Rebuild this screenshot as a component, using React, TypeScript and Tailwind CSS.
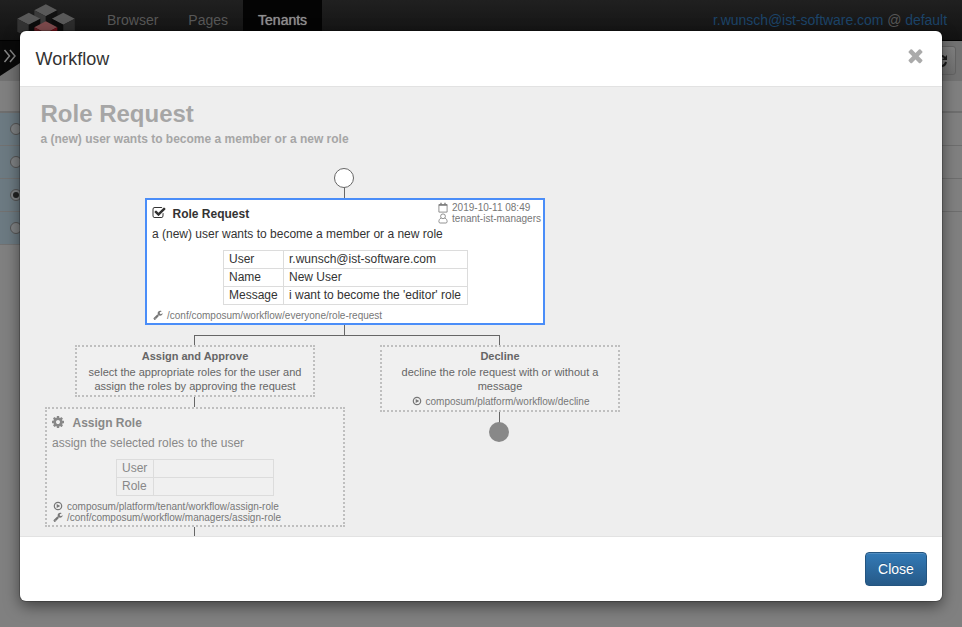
import type { ReactNode } from "react";

const PATHS = {
  check:
    "M1472 930v318q0 119-84.5 203.5t-203.5 84.5h-832q-119 0-203.5-84.5t-84.5-203.5v-832q0-119 84.5-203.5t203.5-84.5h832q63 0 117 25 15 7 18 23 3 17-9 29l-49 49q-10 10-23 10-3 0-9-2-23-6-45-6h-832q-66 0-113 47t-47 113v832q0 66 47 113t113 47h832q66 0 113-47t47-113v-254q0-13 9-22l64-64q10-10 23-10 6 0 12 3 20 8 20 29zm231-489l-814 814q-24 24-57 24t-57-24l-430-430q-24-24-24-57t24-57l110-110q24-24 57-24t57 24l263 263 647-647q24-24 57-24t57 24l110 110q24 24 24 57t-24 57z",
  times:
    "M1490 1322q0 40-28 68l-136 136q-28 28-68 28t-68-28l-294-294-294 294q-28 28-68 28t-68-28l-136-136q-28-28-28-68t28-68l294-294-294-294q-28-28-28-68t28-68l136-136q28-28 68-28t68 28l294 294 294-294q28-28 68-28t68 28l136 136q28 28 28 68t-28 68l-294 294 294 294q28 28 28 68z",
  cog: "M1152 896q0-106-75-181t-181-75-181 75-75 181 75 181 181 75 181-75 75-181zm512-109v222q0 12-8 23t-20 13l-185 28q-19 54-39 91 35 50 107 138 10 12 10 25t-9 23q-27 37-99 108t-94 71q-12 0-26-9l-138-108q-44 23-91 38-16 136-29 186-7 28-36 28h-222q-14 0-24.5-8.5t-11.5-21.5l-28-184q-49-16-90-37l-141 107q-10 9-25 9-14 0-25-11-126-114-165-168-7-10-7-23 0-12 8-23 15-21 51-66.5t54-70.5q-27-50-41-99l-183-27q-13-2-21-12.5t-8-23.5v-222q0-12 8-23t19-13l186-28q14-46 39-92-40-57-107-138-10-12-10-24 0-10 9-23 26-36 98.5-107.5t94.5-71.5q13 0 26 10l138 107q44-23 91-38 16-136 29-186 7-28 36-28h222q14 0 24.5 8.5t11.5 21.5l28 184q49 16 90 37l142-107q9-9 24-9 13 0 25 10 129 119 165 170 7 8 7 22 0 12-8 23-15 21-51 66.5t-54 70.5q26 50 41 98l183 28q13 2 21 12.5t8 23.5z",
  wrench:
    "M448 1472q0-26-19-45t-45-19-45 19-19 45 19 45 45 19 45-19 19-45zm644-420l-682 682q-37 37-90 37-52 0-91-37l-106-108q-38-36-38-90 0-53 38-91l681-681q39 98 114.500 173.500t173.500 114.500zm634-435q0 39-23 106-47 134-164.500 217.500t-258.500 83.500q-185 0-316.500-131.500t-131.500-316.500 131.500-316.500 316.500-131.500q58 0 121.500 16.500t107.500 46.500q16 11 16 28t-16 28l-293 169v224l193 107q5-3 79-48.500t135.500-81 70.500-35.500q15 0 23.500 10t8.500 25z",
};

function Glyph({ name, className }: { name: keyof typeof PATHS; className: string }) {
  return (
    <svg viewBox="0 0 1792 1792" className={`shrink-0 fill-current ${className}`}>
      <path d={PATHS[name]} />
    </svg>
  );
}

function WrenchIcon() {
  return <Glyph name="wrench" className="mt-[-2px] mr-[-1px] ml-px size-[10px]" />;
}

function PlayIcon() {
  return (
    <svg viewBox="0 0 10 10" className="mt-[-1px] mr-[-1px] ml-px size-[10px] shrink-0" fill="none">
      <circle cx="5" cy="5" r="3.700" stroke="currentColor" strokeWidth="1.200" />
      <path d="M3.700 2.900v4.200l3.600-2.100z" fill="currentColor" />
    </svg>
  );
}

function CalendarIcon() {
  return (
    <svg viewBox="0 0 10 11" className="h-[11px] w-[10px] shrink-0" fill="none" stroke="currentColor">
      <path d="M.9 2.500h8.200v7.600H.9z" strokeWidth=".8" />
      <path d="M.9 3.200h8.200" strokeWidth="1.200" />
      <path d="M3 .8v2M7 .8v2" strokeWidth="1.300" />
    </svg>
  );
}

function UserIcon() {
  return (
    <svg viewBox="0 0 10 11" className="mt-[-1px] h-[11px] w-[10px] shrink-0" fill="none" stroke="currentColor" strokeWidth=".8">
      <circle cx="5" cy="3.300" r="2.400" />
      <path d="M3.200 5.200C1.600 5.500.9 7 .9 8.700c0 .8.500 1.300 1.200 1.300h5.800c.7 0 1.200-.5 1.200-1.300 0-1.700-.7-3.200-2.300-3.500" />
    </svg>
  );
}

function Cube({ x, y, top, left, right }: { x: number; y: number; top: string; left: string; right: string }) {
  return (
    <g transform={`translate(${x} ${y})`}>
      <path d="M0 0l11.500 6L0 12-11.500 6z" fill={top} />
      <path d="M-11.500 6L0 12v13l-11.500-6z" fill={left} />
      <path d="M11.500 6L0 12v13l11.500-6z" fill={right} />
    </g>
  );
}

function Logo() {
  return (
    <svg viewBox="0 0 62 40" className="ml-[15px] h-10 w-[62px] shrink-0">
      <Cube x={30.800} y={4.300} top="#595959" left="#3a3a3a" right="#111" />
      <Cube x={13.800} y={12.700} top="#595959" left="#333" right="#0c0c0c" />
      <Cube x={48.300} y={12.700} top="#595959" left="#0c0c0c" right="#2c2c2c" />
      <Cube x={30.800} y={21.300} top="#7d4a4c" left="#631a20" right="#73101a" />
    </svg>
  );
}

function Radio({ on }: { on?: boolean }) {
  return (
    <div className="flex h-[33px] items-center border-b border-[#717171] bg-[#6c7a82] pb-px pl-[10px]">
      <div className="flex size-3 items-center justify-center rounded-full border border-[#555] bg-[#7f8284]">
        {on && <div className="size-[6px] rounded-full bg-[#222]" />}
      </div>
    </div>
  );
}

function Fields({ rows, className, label }: { rows: [string, string][]; className: string; label: string }) {
  return (
    <div className={`border-t border-l border-[#dcdcdc] ${className}`}>
      {rows.map(([k, v]) => (
        <div key={k} className="flex h-[18px] border-b border-[#dcdcdc] leading-[17px]">
          <div className={`border-r border-[#dcdcdc] pl-[5px] ${label}`}>{k}</div>
          <div className="grow border-r border-[#dcdcdc] pl-[5px]">{v}</div>
        </div>
      ))}
    </div>
  );
}

function Small({ icon, children, className = "" }: { icon: ReactNode; children: ReactNode; className?: string }) {
  return (
    <div className={`flex h-[11px] items-center text-[10px] leading-[11px] ${className}`}>
      {icon}
      <span className="ml-[5px]">{children}</span>
    </div>
  );
}

function Line({ className }: { className: string }) {
  return <div className={`absolute bg-[#666] ${className}`} />;
}

function Diagram() {
  return (
    <>
      <Line className="top-[100px] left-[324px] h-[12px] w-px" />
      <div className="absolute top-[81px] left-[314px] size-5 rounded-full border border-[#666] bg-white" />
      <Line className="top-[238px] left-[324px] h-[11px] w-px" />
      <Line className="top-[248px] left-[174px] h-px w-[306px]" />
      <Line className="top-[248px] left-[174px] h-[11px] w-px" />
      <Line className="top-[248px] left-[479px] h-[11px] w-px" />
      <Line className="top-[310px] left-[174px] h-[11px] w-px" />
      <Line className="top-[440px] left-[174px] h-[9px] w-px" />
      <Line className="top-[325px] left-[479px] h-[11px] w-px" />
      <div className="absolute top-[335px] left-[469px] size-5 rounded-full bg-[#888]" />

      <div className="absolute top-[111px] left-[125px] flex h-[127px] w-[400px] flex-col border-2 border-[#4a8df8] bg-white pl-[5px] text-[12px]">
        <div className="flex h-[27px]">
          <Glyph name="check" className="mt-[6px] size-[14px]" />
          <div className="ml-[6.5px] pt-[7px] leading-[15px] font-bold">Role Request</div>
          <div className="mr-[2px] ml-auto pt-[2px] text-[#777]">
            <Small icon={<CalendarIcon />}><span className="-ml-px">2019-10-11 08:49</span></Small>
            <Small icon={<UserIcon />}><span className="-ml-px">tenant-ist-managers</span></Small>
          </div>
        </div>
        <div className="leading-[14px]">a (new) user wants to become a member or a new role</div>
        <Fields
          className="mt-[9px] ml-[71px] w-[245px]"
          label="w-[60px]"
          rows={[["User", "r.wunsch@ist-software.com"], ["Name", "New User"], ["Message", "i want to become the 'editor' role"]]}
        />
        <Small className="mt-[5px] text-[#777]" icon={<WrenchIcon />}>/conf/composum/workflow/everyone/role-request</Small>
      </div>

      <div className="absolute top-[258px] left-[55px] h-[52px] w-[240px] border-2 border-dotted border-[#bfbfbf] bg-[#f0f0f0] pt-[2px] text-center text-[11px] leading-[14px] text-[#666]">
        <div className="mb-[2px] font-bold">Assign and Approve</div>
        <div>select the appropriate roles for the user and</div>
        <div>assign the roles by approving the request</div>
      </div>

      <div className="absolute top-[258px] left-[360px] flex h-[67px] w-[240px] flex-col items-center border-2 border-dotted border-[#bfbfbf] bg-[#f0f0f0] pt-[2px] text-center text-[11px] leading-[14px] text-[#666]">
        <div className="mb-[2px] font-bold">Decline</div>
        <div>decline the role request with or without a</div>
        <div>message</div>
        <Small className="mt-[3px] text-[#777]" icon={<PlayIcon />}>composum/platform/workflow/decline</Small>
      </div>

      <div className="absolute top-[320px] left-[25px] h-[120px] w-[300px] border-2 border-dotted border-[#bfbfbf] bg-[#f0f0f0] pl-[5px] text-[12px] text-[#888]">
        <div className="flex h-[27px] pt-[7px]">
          <Glyph name="cog" className="mt-[-1px] ml-[-1px] size-[14px]" />
          <div className="ml-[7.5px] leading-[15px] font-bold">Assign Role</div>
        </div>
        <div className="leading-[14px]">assign the selected roles to the user</div>
        <Fields className="mt-[9px] ml-[64px] w-[158px]" label="w-[37px]" rows={[["User", ""], ["Role", ""]]} />
        <Small className="mt-[5px] text-[#777]" icon={<PlayIcon />}>composum/platform/tenant/workflow/assign-role</Small>
        <Small className="text-[#777]" icon={<WrenchIcon />}>/conf/composum/workflow/managers/assign-role</Small>
      </div>
    </>
  );
}

function Page() {
  return (
    <div className="flex h-full flex-col">
      <div className="flex h-[41px] shrink-0 border-b border-black bg-linear-to-b from-[#202020] to-[#121212] text-[14px] leading-10 text-[#575757]">
        <Logo />
        <div className="ml-[15px] px-[15px]">Browser</div>
        <div className="px-[15px]">Pages</div>
        <div className="bg-[#040404] px-[15px] text-[#8f8f8f] [text-shadow:0_0_1px_#8f8f8f]">Tenants</div>
        <div className="mr-[15px] ml-auto tracking-[-0.04px] text-[#1c4469]">
          r.wunsch@ist-software.com <span className="text-[#575757]">@</span> default
        </div>
      </div>
      <div className="flex h-10 shrink-0 justify-between bg-[#727272]">
        <svg viewBox="0 0 40 40" className="h-10 w-10">
          <path d="M0 0h40v9L0 35z" fill="#090909" />
          <path d="M4.500 9l5 6-5 6M10 9l5 6-5 6" fill="none" stroke="#858585" strokeWidth="1.500" />
        </svg>
        <div className="mt-[5px] mr-[6px] flex h-[29px] w-[34px] items-center justify-center rounded-[3px] border border-[#636363] bg-linear-to-b from-[#808080] to-[#6f6f6f]">
          <svg viewBox="0 0 14 14" className="ml-[3px] size-[14px]" fill="none" stroke="#1a1a1a" strokeWidth="2">
            <path d="M2 6a5 5 0 0 1 9-2M12 8a5 5 0 0 1-9 2" />
            <path d="M13 1v5H8zM1 13V8h5z" fill="#1a1a1a" stroke="none" />
          </svg>
        </div>
      </div>
      <div className="h-[32px] shrink-0 border-b-2 border-[#6e6e6e] bg-[#808080]" />
      <div className="flex grow justify-between bg-[#808080]">
        <div className="w-20">
          <Radio />
          <Radio />
          <Radio on />
          <Radio />
        </div>
        <div className="w-40">
          <div className="h-[33px] border-b border-[#6e6e6e]" />
          <div className="h-[33px] border-b border-[#6e6e6e]" />
          <div className="h-[33px] border-b border-[#6e6e6e]" />
        </div>
      </div>
    </div>
  );
}

export default function App() {
  return (
    <div className="relative h-[627px] w-[962px] overflow-hidden font-['Liberation_Sans',Arial,sans-serif] text-[#333]">
      <Page />
      <div className="absolute top-[31px] left-5 flex h-[570px] w-[922px] flex-col overflow-hidden rounded-[6px] bg-white shadow-[0_5px_15px_rgba(0,0,0,0.5),0_0_0_1px_rgba(0,0,0,0.2)]">
        <div className="flex h-[56px] shrink-0 justify-between border-b border-[#e2e2e2] pr-[16px] pl-[15.5px]">
          <div className="pt-[15px] text-[18px] leading-[26px]">Workflow</div>
          <Glyph name="times" className="mt-[14px] size-[21px] text-[#aaa]" />
        </div>
        <div className="relative h-[449px] shrink-0 overflow-hidden bg-[#eee] pl-[20.5px] font-bold text-[#a6a6a6]">
          <div className="pt-[11px] text-[24px] leading-[32px]">Role Request</div>
          <div className="pt-[2px] text-[12px] leading-[14px]">a (new) user wants to become a member or a new role</div>
          <div className="font-normal text-[#333]">
            <Diagram />
          </div>
        </div>
        <div className="flex grow justify-end border-t border-[#e2e2e2] p-[15px]">
          <button className="h-[34px] w-[62px] rounded-[4px] border border-[#245580] bg-linear-to-b from-[#337ab7] to-[#265a88] text-[14px] leading-5 text-white shadow-[inset_0_1px_0_rgba(255,255,255,0.15)] [text-shadow:0_-1px_0_rgba(0,0,0,0.2)]">
            Close
          </button>
        </div>
      </div>
    </div>
  );
}
